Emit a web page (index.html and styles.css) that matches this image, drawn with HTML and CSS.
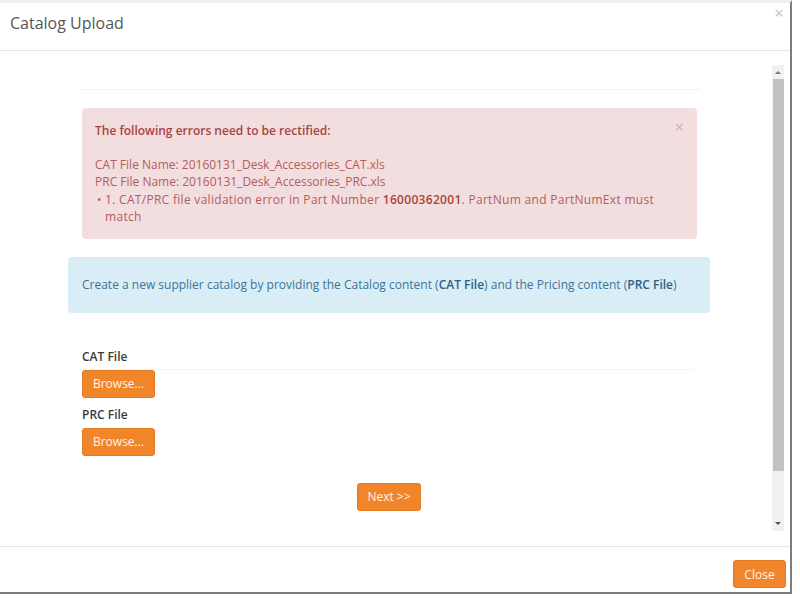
FILE: index.html
```html
<!DOCTYPE html>
<html>
<head>
<meta charset="utf-8">
<link rel="stylesheet" href="styles.css">
</head>
<body>
<div class="dialog">
  <div class="header">
    <span class="title">Catalog Upload</span>
    <span class="x">×</span>
  </div>
  <div class="body">
    <div class="content">
      <div class="rule"></div>
      <div class="alert-error">
        <span class="alert-x">×</span>
        <div class="err-title">The following errors need to be rectified:</div>
        <div class="err-lines">
          <div>CAT File Name: 20160131_Desk_Accessories_CAT.xls</div>
          <div>PRC File Name: 20160131_Desk_Accessories_PRC.xls</div>
          <ul class="err-list">
            <li>1. CAT/PRC file validation error in Part Number <b>16000362001</b>. PartNum and PartNumExt must<br>match</li>
          </ul>
        </div>
      </div>
      <div class="alert-info">
        <span>Create a new supplier catalog by providing the Catalog content (<b>CAT File</b>) and the Pricing content (<b>PRC File</b>)</span>
      </div>
      <div class="form">
        <div class="label first">CAT File</div>
        <div class="file-row"><span class="btn">Browse...</span></div>
        <div class="label">PRC File</div>
        <div class="file-row plain"><span class="btn">Browse...</span></div>
        <div class="next-row"><span class="btn next">Next &gt;&gt;</span></div>
      </div>
    </div>
    <div class="scrollbar">
      <div class="arrow up"></div>
      <div class="thumb"></div>
      <div class="track"></div>
      <div class="arrow down"></div>
    </div>
  </div>
  <div class="footer">
    <span class="btn close">Close</span>
  </div>
</div>
</body>
</html>
```
FILE: styles.css
```css
html, body {
  margin: 0;
  padding: 0;
  background: #ffffff;
}
body {
  font-family: "Open Sans", "Liberation Sans", sans-serif;
  font-size: 12px;
  color: #333;
}
.dialog {
  width: 790px;
  height: 589px;
  border-top: 3px solid #f0f0f0;
  border-right: 2px solid #7d7d7d;
  border-bottom: 2px solid #7d7d7d;
  display: flex;
  flex-direction: column;
  background: #fff;
}
.header {
  position: relative;
  height: 48px;
  border-bottom: 1px solid #e6e6e6;
  display: flex;
  align-items: center;
  padding-left: 10px;
  padding-bottom: 8px;
  box-sizing: border-box;
}
.title {
  font-size: 16px;
  color: #555;
}
.x {
  position: absolute;
  right: 6px;
  top: 0px;
  font-size: 17px;
  color: #c4c4c4;
  line-height: 20px;
}
.body {
  height: 495px;
  display: flex;
  padding-right: 6px;
}
.content {
  flex: 1;
}
.rule {
  margin: 38px 0 0 80px;
  width: 620px;
  height: 1px;
  background: #f2f2f2;
}
.alert-error {
  position: relative;
  margin: 18px 0 0 82px;
  width: 615px;
  box-sizing: border-box;
  padding: 14px 13px 13px 13px;
  background: #f2dede;
  border-radius: 4px;
  color: #b25d5d;
  line-height: 17.5px;
}
.alert-x {
  position: absolute;
  right: 13px;
  top: 11px;
  font-size: 16px;
  color: #cdb0b0;
}
.err-title {
  font-weight: 600;
  color: #a94442;
}
.err-lines {
  margin-top: 16px;
}
.err-list {
  list-style: none;
  margin: 0;
  padding: 0;
}
.err-list li {
  position: relative;
  padding: 0 10px 0 10px;
  letter-spacing: 0.3px;
}
.err-list li::before {
  content: "•";
  position: absolute;
  left: 2px;
  top: 0;
}
.err-list b {
  font-weight: 600;
  color: #a94442;
}
.alert-info {
  margin: 18px 0 0 68px;
  width: 642px;
  height: 56px;
  box-sizing: border-box;
  padding: 0 14px;
  background: #d9edf7;
  border-radius: 4px;
  color: #3c7596;
  display: flex;
  align-items: center;
}
.alert-info b {
  font-weight: 600;
  color: #2b6283;
}
.label {
  margin: 8px 0 5px 82px;
  line-height: 17px;
  font-weight: 600;
  color: #3a3a3a;
}
.label.first {
  margin-top: 35px;
}
.file-row {
  margin-left: 80px;
  width: 610px;
  border-top: 1px solid #f4f4f4;
  margin-top: -1px;
  padding-left: 2px;
  display: flex;
}
.file-row.plain {
  border-top-color: transparent;
}
.btn {
  display: inline-flex;
  align-items: center;
  justify-content: center;
  height: 28px;
  box-sizing: border-box;
  background: #f0852a;
  border: 1px solid #e27a22;
  border-radius: 3px;
  color: #fff3ea;
  font-size: 12px;
}
.file-row .btn {
  width: 73px;
}
.next-row {
  margin-top: 27px;
  display: flex;
  justify-content: center;
  padding-left: 6px;
}
.btn.next {
  width: 64px;
}
.scrollbar {
  width: 12px;
  margin: 14px 0 15px 0;
  background: #f1f1f1;
  display: flex;
  flex-direction: column;
  align-items: center;
}
.arrow {
  width: 0;
  height: 0;
  border-left: 3px solid transparent;
  border-right: 3px solid transparent;
  margin: 5px 0;
}
.arrow.up {
  border-bottom: 3px solid #777;
  margin-top: 6px;
}
.arrow.down {
  border-top: 3px solid #555;
  margin-bottom: 6px;
}
.thumb {
  width: 11px;
  height: 392px;
  background: #c2c2c2;
}
.track {
  flex: 1;
}
.footer {
  flex: 1;
  border-top: 1px solid #e6e6e6;
  display: flex;
  justify-content: flex-end;
  align-items: flex-start;
  padding: 13px 4px 0 0;
}
.btn.close {
  width: 53px;
  font-size: 12px;
}
```
